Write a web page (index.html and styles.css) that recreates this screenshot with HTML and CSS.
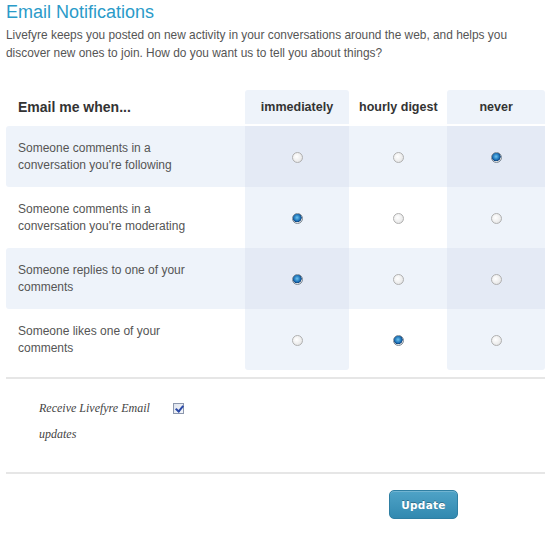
FILE: index.html
```html
<!DOCTYPE html>
<html lang="en">
<head>
<meta charset="UTF-8" />
<title>Email Notifications</title>
<link rel="stylesheet" href="styles.css">
</head>
<body>

<div class="container">
  <h2 class="title">Email Notifications</h2>
  <p class="intro">Livefyre keeps you posted on new activity in your conversations around the web, and helps you discover new ones to join. How do you want us to tell you about things?</p>

  <form id="notifyForm">
    <table class="prefs">
      <thead>
        <tr>
          <th class="label-col">Email me when...</th>
          <th class="opt on">immediately</th>
          <th class="opt">hourly digest</th>
          <th class="opt on">never</th>
        </tr>
      </thead>
      <tbody>
        <tr class="alt">
          <td class="label-col">Someone comments in a conversation you're following</td>
          <td class="opt on"><input type="radio" name="follow" value="now" /></td>
          <td class="opt"><input type="radio" name="follow" value="hourly" /></td>
          <td class="opt on"><input type="radio" name="follow" value="never" checked /></td>
        </tr>
        <tr>
          <td class="label-col">Someone comments in a conversation you're moderating</td>
          <td class="opt on"><input type="radio" name="moderate" value="now" checked /></td>
          <td class="opt"><input type="radio" name="moderate" value="hourly" /></td>
          <td class="opt on"><input type="radio" name="moderate" value="never" /></td>
        </tr>
        <tr class="alt">
          <td class="label-col">Someone replies to one of your comments</td>
          <td class="opt on"><input type="radio" name="reply" value="now" checked /></td>
          <td class="opt"><input type="radio" name="reply" value="hourly" /></td>
          <td class="opt on"><input type="radio" name="reply" value="never" /></td>
        </tr>
        <tr class="last">
          <td class="label-col">Someone likes one of your comments</td>
          <td class="opt on"><input type="radio" name="like" value="now" /></td>
          <td class="opt"><input type="radio" name="like" value="hourly" checked /></td>
          <td class="opt on"><input type="radio" name="like" value="never" /></td>
        </tr>
      </tbody>
    </table>

    <div class="divider"></div>

    <div class="optin">
      <label for="updates">Receive Livefyre Email updates</label>
      <input type="checkbox" id="updates" name="updates" checked />
    </div>

    <div class="divider"></div>

    <div class="actions">
      <button type="submit" class="btn-update">Update</button>
    </div>
  </form>
</div>

</body>
</html>
```

FILE: styles.css
```css
body {
  font-family: "Liberation Sans", Arial, sans-serif;
  background: #fff;
  color: #555;
  margin: 0;
  padding: 0;
}
.container {
  width: 539px;
  padding: 0 5px 0 6px;
}
.title {
  font-size: 18px;
  font-weight: normal;
  color: #2b9bc9;
  margin: 1px 0 3px 0;
  line-height: 22px;
}
.intro {
  font-size: 11.9px;
  line-height: 18px;
  margin: 0 0 28px 0;
  color: #555;
}
.prefs {
  width: 539px;
  border-collapse: separate;
  border-spacing: 0;
  font-size: 12px;
}
.prefs th {
  height: 34px;
  padding: 0;
  font-weight: bold;
  font-size: 12.5px;
  color: #333;
  border-bottom: 2px solid #fff;
}
.prefs th.label-col {
  text-align: left;
  padding-left: 12px;
  font-size: 14px;
}
.prefs th.on {
  background: #eef3fa;
  border-radius: 3px 3px 0 0;
}
.prefs td {
  height: 61px;
  padding: 0;
  text-align: center;
  vertical-align: middle;
}
.prefs td.label-col {
  text-align: left;
  padding: 0 37px 0 12px;
  line-height: 17px;
  width: 190px;
}
.prefs .opt {
  width: 98px;
}
.prefs th.opt:nth-child(2) {
  width: 105px;
}
.prefs td.on {
  background: #eef3fa;
}
.prefs tr.alt td {
  background: #eef3fa;
}
.prefs tr.alt td.on {
  background: #e4eaf5;
}
.prefs tr.alt td:first-child {
  border-radius: 3px 0 0 3px;
}
.prefs tr.last td.on {
  border-radius: 0 0 3px 3px;
}
input[type="radio"] {
  appearance: none;
  -webkit-appearance: none;
  width: 11px;
  height: 11px;
  margin: 0;
  border: 1px solid #b0b0b0;
  border-radius: 50%;
  background: radial-gradient(circle at 40% 40%, #fff 0%, #ececec 60%, #d6d6d6 100%);
  vertical-align: middle;
}
input[type="radio"]:checked {
  border-color: #7d8a96;
  background: radial-gradient(circle at 45% 40%, #6cc4f0 0%, #1a6fb5 45%, #0c3f78 60%, #e2e2e2 65%, #cfcfcf 100%);
}
.divider {
  height: 2px;
  background: #e6e6e6;
  margin: 7px 0 0 0;
}
.optin {
  display: flex;
  align-items: flex-start;
  padding: 16px 0 0 33px;
  height: 70px;
}
.optin label {
  width: 131px;
  font-family: "Liberation Serif", "Times New Roman", serif;
  font-style: italic;
  font-size: 12px;
  line-height: 26px;
  color: #444;
}
input[type="checkbox"] {
  appearance: none;
  -webkit-appearance: none;
  width: 11px;
  height: 11px;
  margin: 8px 0 0 3px;
  border: 1px solid #8c97ad;
  background: linear-gradient(135deg, #dfe4ee, #f4f6fa);
  position: relative;
}
input[type="checkbox"]:checked::after {
  content: "";
  position: absolute;
  left: 3px;
  top: 0px;
  width: 3px;
  height: 6px;
  border: solid #2b4aa8;
  border-width: 0 2px 2px 0;
  transform: rotate(40deg);
}
.actions {
  padding: 16px 0 0 383px;
}
.btn-update {
  width: 69px;
  height: 29px;
  background: linear-gradient(#4fa3c7, #3289b0);
  border: 1px solid #2f7fa3;
  border-radius: 5px;
  color: #fff;
  font-family: "DejaVu Sans", Verdana, sans-serif;
  font-weight: bold;
  font-size: 10.5px;
  letter-spacing: 0.3px;
  text-shadow: 0 -1px 0 rgba(0,0,0,0.3);
  box-shadow: inset 0 1px 0 rgba(255,255,255,0.2);
  cursor: pointer;
}
```
